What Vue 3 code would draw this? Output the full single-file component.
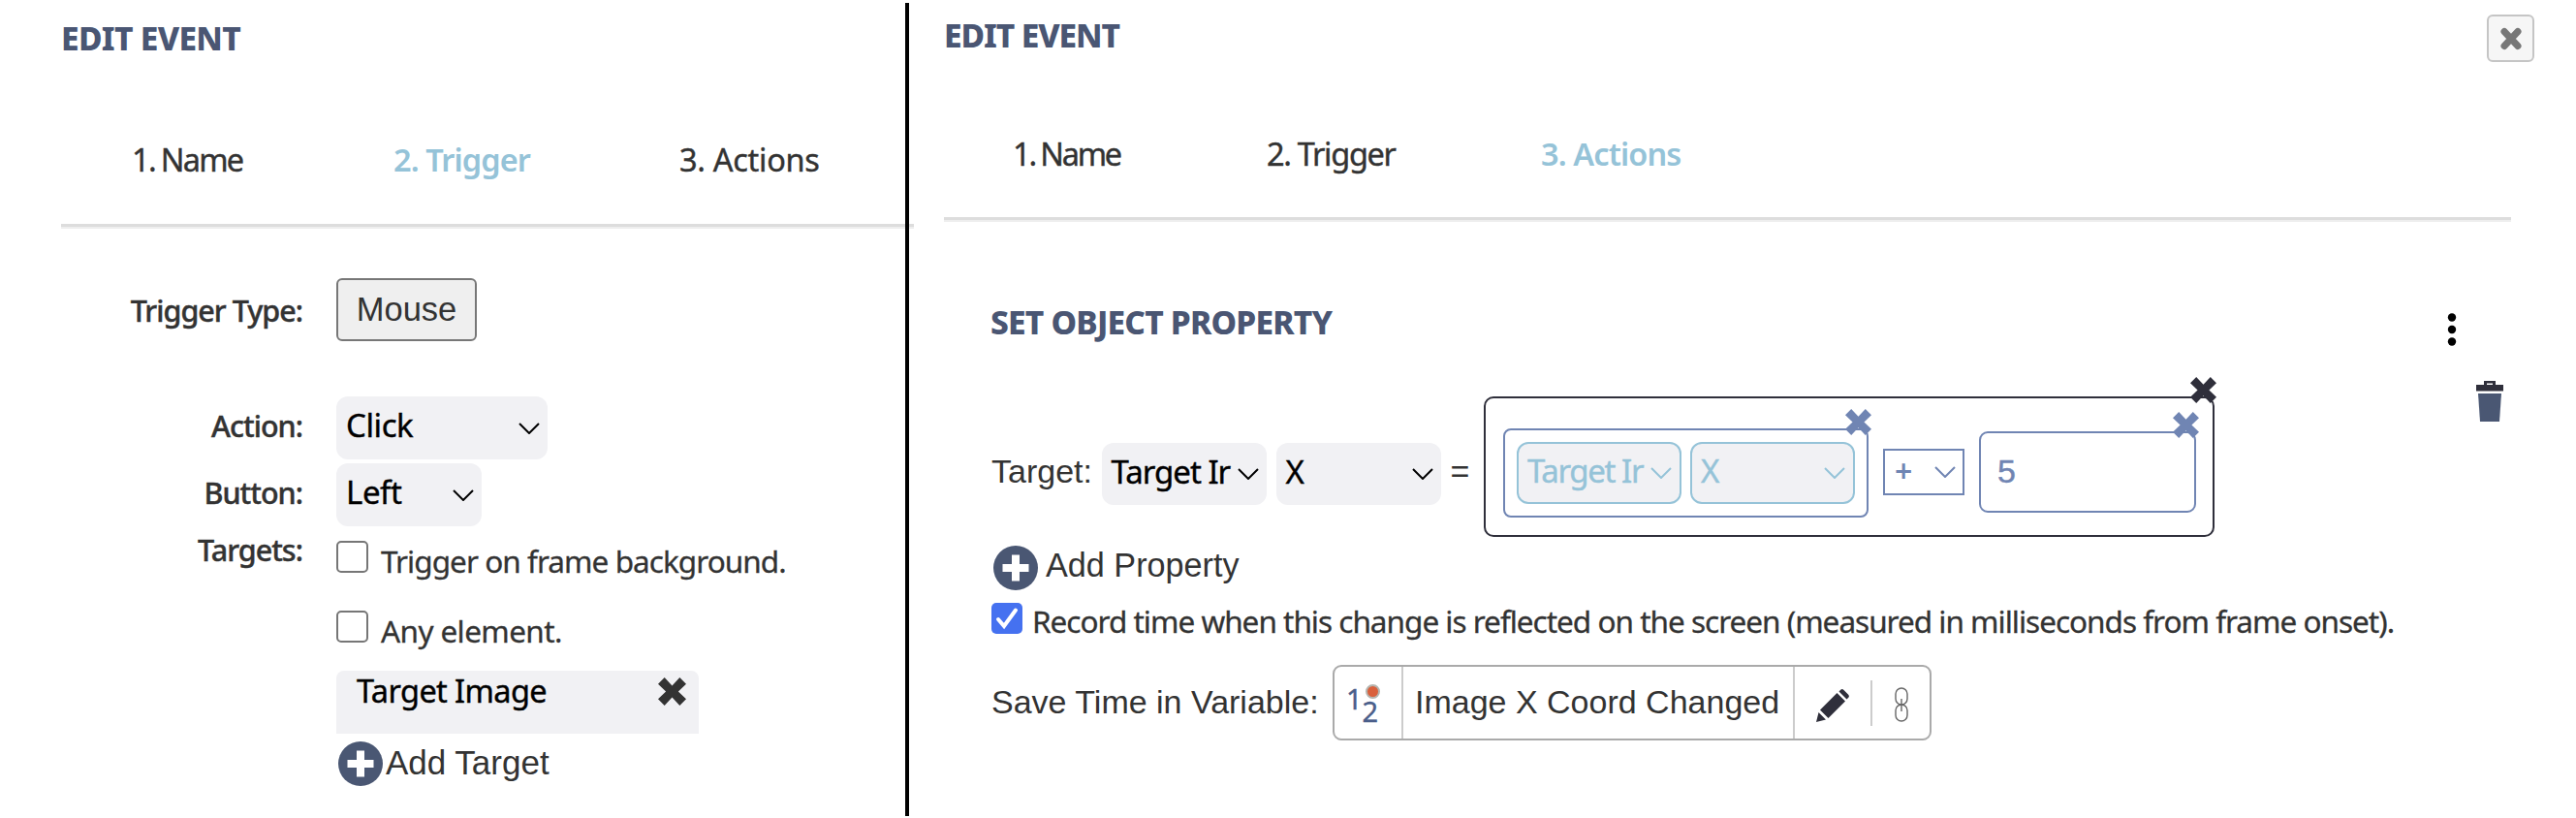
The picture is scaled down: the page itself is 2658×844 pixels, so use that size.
<template>
  <div class="page">
    <!-- Trigger step -->
    <section class="panel trigger-panel">
      <h2 class="title left-title">EDIT EVENT</h2>
      <nav class="tabs left-tabs">
        <span v-for="tab in tabs" :key="tab.id" class="tab" :class="[tab.id, { active: tab.id === 'trigger' }]">{{ tab.label }}</span>
      </nav>
      <div class="rule left-rule"></div>

      <div class="form-row type-row">
        <label class="label l-type">Trigger Type:</label>
        <button class="mouse-button">Mouse</button>
      </div>
      <div class="form-row action-row">
        <label class="label l-action">Action:</label>
        <div class="select click-select">
          <span class="value">Click</span>
          <svg class="chevron" viewBox="0 0 22 12"><path d="M1 1l10 10L21 1" /></svg>
        </div>
      </div>
      <div class="form-row button-row">
        <label class="label l-button">Button:</label>
        <div class="select left-select">
          <span class="value">Left</span>
          <svg class="chevron" viewBox="0 0 22 12"><path d="M1 1l10 10L21 1" /></svg>
        </div>
      </div>
      <div class="form-row targets-row">
        <label class="label l-targets">Targets:</label>
        <div class="targets">
          <div class="check-row">
            <span class="checkbox"></span>
            <span class="check-text t-frame">Trigger on frame background.</span>
          </div>
          <div class="check-row second">
            <span class="checkbox"></span>
            <span class="check-text t-any">Any element.</span>
          </div>
          <div class="chip">
            <span class="chip-text">Target Image</span>
            <svg class="chip-x" viewBox="0 0 10 10"><path :d="crossPath" /></svg>
          </div>
          <div class="add add-target">
            <svg class="plus" viewBox="0 0 46 46"><circle cx="23" cy="23" r="23" /><path d="M23 9.500v27M9.500 23h27" /></svg>
            <span>Add Target</span>
          </div>
        </div>
      </div>
    </section>

    <div class="divider"></div>

    <!-- Actions step -->
    <section class="panel actions-panel">
      <header class="header">
        <h2 class="title right-title">EDIT EVENT</h2>
        <button class="close">
          <svg viewBox="0 0 24 24"><path d="M5 4.500l14 15M19 4.500L5 19.500" /></svg>
        </button>
      </header>
      <nav class="tabs right-tabs">
        <span v-for="tab in tabs" :key="tab.id" class="tab" :class="[tab.id, { active: tab.id === 'actions' }]">{{ tab.label }}</span>
      </nav>
      <div class="rule right-rule"></div>

      <div class="action-body">
        <div class="action-main">
          <h3 class="title action-title">SET OBJECT PROPERTY</h3>

          <div class="formula">
            <div class="formula-left">
              <span class="arial target-label">Target:</span>
              <div class="select prop-select">
                <span class="value">Target Ir</span>
                <svg class="chevron" viewBox="0 0 22 12"><path d="M1 1l10 10L21 1" /></svg>
              </div>
              <div class="select prop-select">
                <span class="value">X</span>
                <svg class="chevron" viewBox="0 0 22 12"><path d="M1 1l10 10L21 1" /></svg>
              </div>
              <span class="arial equals">=</span>
            </div>

            <div class="expression">
              <svg class="corner-x" viewBox="0 0 10 10"><path :d="crossPath" /></svg>
              <div class="operand">
                <svg class="corner-x" viewBox="0 0 10 10"><path :d="crossPath" /></svg>
                <div class="select prop-select light">
                  <span class="value">Target Ir</span>
                  <svg class="chevron" viewBox="0 0 22 12"><path d="M1 1l10 10L21 1" /></svg>
                </div>
                <div class="select prop-select light">
                  <span class="value">X</span>
                  <svg class="chevron" viewBox="0 0 22 12"><path d="M1 1l10 10L21 1" /></svg>
                </div>
              </div>
              <div class="operator">
                <span>+</span>
                <svg class="chevron" viewBox="0 0 22 12"><path d="M1 1l10 10L21 1" /></svg>
              </div>
              <div class="number">
                <svg class="corner-x" viewBox="0 0 10 10"><path :d="crossPath" /></svg>
                <span>5</span>
              </div>
            </div>
          </div>

          <div class="add add-property">
            <svg class="plus" viewBox="0 0 46 46"><circle cx="23" cy="23" r="23" /><path d="M23 9.500v27M9.500 23h27" /></svg>
            <span>Add Property</span>
          </div>

          <div class="check-row record-row">
            <svg class="checked" viewBox="0 0 32 32"><rect width="32" height="32" rx="5" /><path d="M7 17l6 7L25 7.500" /></svg>
            <span class="check-text t-record">Record time when this change is reflected on the screen (measured in milliseconds from frame onset).</span>
          </div>

          <div class="save-row">
            <span class="arial save-label">Save Time in Variable:</span>
            <div class="variable">
              <div class="var-type">
                <span class="one">1</span>
                <span class="two">2</span>
                <i class="dot"></i>
              </div>
              <span class="arial var-name">Image X Coord Changed</span>
              <div class="var-edit">
                <svg class="pencil" viewBox="0 0 34 34">
                  <path d="M0 34l2.500-10 7.500 7.500zM4 21.500L21.500 4l8.500 8.500L12.500 30zM23.500 2.500L25.500.5q1.500-1 3 .5l4.500 4.500q1.500 1.500.5 3l-2 2z" />
                </svg>
                <span class="bar"></span>
                <svg class="chain" viewBox="0 0 14 36">
                  <rect x="1" y="1" width="12" height="17" rx="6" />
                  <rect x="1" y="18" width="12" height="17" rx="6" />
                  <path d="M7 12v13" />
                </svg>
              </div>
            </div>
          </div>
        </div>

        <div class="action-tools">
          <svg class="dots" viewBox="0 0 10 34"><circle cx="5" cy="4.500" r="4.200" /><circle cx="5" cy="17" r="4.200" /><circle cx="5" cy="29.500" r="4.200" /></svg>
          <svg class="trash" viewBox="0 0 28 42">
            <path class="lid" d="M0 4h8V0h12v4h8v6.500H0zM11 2.500V4h6V2.500z" fill-rule="evenodd" />
            <path class="bin" d="M2 13h24l-2 29H4z" />
          </svg>
        </div>
      </div>
    </section>
  </div>
</template>

<script setup>
const tabs = [
  { id: 'name', label: '1. Name' },
  { id: 'trigger', label: '2. Trigger' },
  { id: 'actions', label: '3. Actions' },
]
const crossPath = 'M2.300 0L5 2.900 7.700 0 10 2.300 7.200 5 10 7.700 7.700 10 5 7.100 2.300 10 0 7.700 2.800 5 0 2.300z'
</script>

<style>
body {
  background: #fff;
}
</style>

<style scoped>
.page {
  display: flex;
  width: 2658px;
  height: 844px;
  overflow: hidden;
  background: #fff;
  color: #333;
  font-family: 'Noto Sans', sans-serif;
}

.page * {
  box-sizing: border-box;
}

svg {
  display: block;
  flex: none;
}

.trigger-panel {
  width: 934px;
  flex: none;
  padding-left: 63px;
}

.divider {
  width: 4px;
  flex: none;
  margin: 3px 0 2px;
  background: #000;
  z-index: 1;
}

.actions-panel {
  flex: 1;
  padding-left: 36px;
}

.title {
  margin: 0;
  color: #4a5673;
  font-weight: 800;
  font-size: 33.500px;
  white-space: nowrap;
  letter-spacing: -1.100px;
}

.left-title {
  line-height: 79px;
  height: 78px;
  letter-spacing: -0.7px;
}

.header {
  display: flex;
  justify-content: space-between;
  align-items: flex-start;
  height: 71px;
  padding-right: 43px;
}

.right-title {
  line-height: 72px;
}

.close {
  display: flex;
  align-items: center;
  justify-content: center;
  width: 49px;
  height: 49px;
  margin-top: 15px;
  padding: 0;
  border: 2px solid #c5c5c5;
  border-radius: 6px;
  background: #f6f6f6;
}

.close svg {
  width: 24px;
  height: 24px;
}

.close path {
  stroke: #777;
  stroke-width: 7;
  stroke-linecap: round;
}

.tabs {
  display: grid;
  height: 153px;
  align-items: center;
  font-size: 32.500px;
  white-space: nowrap;
  -webkit-text-stroke: 0.4px currentColor;
}

.left-tabs {
  grid-template-columns: 270px 295px auto;
  padding: 20px 0 0 73px;
}

.left-tabs .name {
  letter-spacing: -1.700px;
  word-spacing: -1px;
}

.left-tabs .trigger {
  letter-spacing: -0.9px;
}

.left-tabs .actions {
  letter-spacing: -0.3px;
}

.right-tabs {
  grid-template-columns: 262px 283px auto;
  padding: 22px 0 0 71px;
}

.right-tabs .name {
  letter-spacing: -2.200px;
  word-spacing: -1px;
}

.right-tabs .trigger {
  letter-spacing: -1.300px;
}

.right-tabs .actions {
  letter-spacing: -0.9px;
}

.tab.active {
  color: #95c3d8;
  font-weight: 600;
  -webkit-text-stroke: 0;
}

.rule {
  height: 5px;
  background: linear-gradient(#ddd 60%, #eee 60%);
}

.left-rule {
  margin-right: -9px;
}

.right-rule {
  margin-right: 67px;
}

.form-row {
  display: grid;
  grid-template-columns: 249px auto;
  column-gap: 35px;
  align-items: center;
  justify-content: start;
}

.type-row {
  margin-top: 51px;
}

.action-row {
  margin-top: 57px;
}

.button-row {
  margin-top: 4px;
}

.targets-row {
  align-items: start;
}

.label {
  font-size: 30.500px;
  font-weight: 500;
  text-align: right;
  letter-spacing: -1px;
  -webkit-text-stroke: 0.4px currentColor;
}

.l-action,
.l-button {
  padding-bottom: 5px;
}

.l-targets {
  line-height: 48px;
}

.mouse-button {
  width: 145px;
  height: 65px;
  padding: 0;
  border: 2px solid #777;
  border-radius: 6px;
  background: #efefef;
  color: #333;
  font: 34.500px 'Liberation Sans', Arial, sans-serif;
}

.select {
  display: flex;
  align-items: center;
  justify-content: space-between;
  height: 65px;
  padding: 0 8px 0 10px;
  border-radius: 12px;
  background: #f1f1f4;
  color: #000;
  font-size: 33px;
}

.click-select {
  width: 218px;
}

.left-select {
  width: 150px;
}

.value {
  padding-bottom: 7px;
  white-space: nowrap;
  letter-spacing: -0.4px;
  -webkit-text-stroke: 0.4px currentColor;
}

.chevron {
  width: 22px;
  height: 12px;
}

.chevron path {
  fill: none;
  stroke: currentColor;
  stroke-width: 2;
}

.targets {
  padding-top: 15px;
}

.check-row {
  display: flex;
  align-items: center;
  height: 33px;
}

.check-row.second {
  margin-top: 39px;
}

.checkbox {
  width: 33px;
  height: 33px;
  margin-right: 13px;
  border: 2px solid #767676;
  border-radius: 5px;
  background: #fff;
}

.check-text {
  padding-top: 8px;
  font-size: 31.500px;
  letter-spacing: -0.95px;
  white-space: nowrap;
  -webkit-text-stroke: 0.3px currentColor;
}

.t-any {
  letter-spacing: -0.6px;
}

.t-record {
  padding-top: 6px;
  letter-spacing: -1px;
}

.chip {
  display: flex;
  align-items: flex-start;
  justify-content: space-between;
  width: 374px;
  height: 65px;
  margin-top: 29px;
  padding: 0 13px 0 21px;
  border-radius: 8px 8px 0 0;
  background: #f1f1f4;
  color: #000;
}

.chip-text {
  line-height: 42px;
  font-size: 32.500px;
  letter-spacing: -0.6px;
  -webkit-text-stroke: 0.4px currentColor;
}

.chip-x {
  width: 29px;
  height: 29px;
  margin-top: 7px;
  fill: #333;
}

.add {
  display: flex;
  align-items: center;
  height: 46px;
  font-family: 'Liberation Sans', Arial, sans-serif;
  font-size: 34.200px;
  white-space: nowrap;
}

.add span {
  padding-bottom: 5px;
}

.add-target {
  margin-top: 8px;
  padding-left: 2px;
  gap: 3px;
  font-size: 35px;
}

.add-target span {
  padding-bottom: 3px;
}

.plus {
  width: 46px;
  height: 46px;
}

.plus circle {
  fill: #4a5773;
}

.plus path {
  stroke: #fff;
  stroke-width: 8;
}

.arial {
  font-family: 'Liberation Sans', Arial, sans-serif;
  font-size: 34px;
  white-space: nowrap;
}

.action-body {
  display: flex;
  padding-left: 49px;
}

.action-main {
  width: 1502px;
  padding-top: 78px;
}

.action-title {
  line-height: 50px;
  margin-left: -1px;
  letter-spacing: -0.8px;
}

.formula {
  display: flex;
  height: 145px;
  margin-top: 52px;
}

.formula-left {
  display: flex;
  align-items: center;
  width: 508px;
  height: 64px;
  margin-top: 48px;
}

.target-label {
  width: 113.500px;
  padding-bottom: 6px;
}

.prop-select {
  width: 170px;
  height: 64px;
  margin-right: 10px;
}

.prop-select .value {
  padding-bottom: 6px;
  letter-spacing: -1px;
}

.equals {
  width: 20px;
  padding-bottom: 5px;
}

.expression {
  position: relative;
  display: flex;
  align-items: center;
  width: 754px;
  padding: 11px 0 0 18px;
  border: 2px solid #2f2f3b;
  border-radius: 10px;
}

.corner-x {
  position: absolute;
  top: -22px;
  right: -4px;
  width: 27px;
  height: 27px;
  fill: #2f2f3b;
}

.operand {
  position: relative;
  display: flex;
  gap: 9px;
  width: 377px;
  height: 92px;
  margin-top: 2px;
  padding: 12px;
  border: 2px solid #7085b3;
  border-radius: 8px;
}

.operand .corner-x,
.number .corner-x {
  right: -5px;
  fill: #7085b3;
}

.light {
  margin: 0;
  padding: 0 8px 0 9px;
  border: 2px solid #95c3d8;
  color: #95c3d8;
}

.light .value {
  padding-bottom: 5px;
  letter-spacing: -1.400px;
}

.operator {
  display: flex;
  align-items: center;
  justify-content: space-between;
  width: 84px;
  height: 48px;
  margin: 0 15px;
  padding: 0 7px 0 10px;
  border: 2px solid #7085b3;
  color: #7085b3;
  font: 600 32px/42px 'Noto Sans', sans-serif;
}

.operator span {
  padding-bottom: 2px;
}

.number {
  position: relative;
  display: flex;
  align-items: center;
  width: 224px;
  height: 84px;
  padding: 0 0 2px 17px;
  border: 2px solid #7085b3;
  border-radius: 9px;
  color: #7085b3;
  font: 34px 'Liberation Sans', Arial, sans-serif;
  -webkit-text-stroke: 0.4px currentColor;
}

.add-property {
  margin-top: 9px;
  padding-left: 2px;
  gap: 8px;
}

.record-row {
  margin-top: 12px;
}

.checked {
  width: 32px;
  height: 32px;
  margin-right: 10px;
}

.checked rect {
  fill: #4571f0;
}

.checked path {
  fill: none;
  stroke: #fff;
  stroke-width: 4;
  stroke-linecap: round;
}

.save-row {
  display: flex;
  align-items: center;
  margin-top: 32px;
}

.save-label {
  width: 352px;
  padding-bottom: 1px;
}

.variable {
  display: flex;
  width: 618px;
  height: 78px;
  border: 2px solid #aaa;
  border-radius: 9px;
}

.var-type {
  position: relative;
  display: flex;
  width: 71px;
  padding-left: 12px;
  border-right: 2px solid #ccc;
  color: #4a5e8a;
  font-size: 29px;
  -webkit-text-stroke: 0.4px currentColor;
}

.one {
  line-height: 65px;
}

.two {
  line-height: 92px;
}

.dot {
  position: absolute;
  left: 32px;
  top: 18px;
  width: 15px;
  height: 15px;
  border: 2px solid #b5b5b0;
  border-radius: 50%;
  background: #d9603c;
}

.var-name {
  width: 404px;
  padding-left: 12px;
  border-right: 2px solid #ccc;
  line-height: 73px;
}

.var-edit {
  display: flex;
  align-items: center;
  padding-left: 22px;
}

.pencil {
  width: 34px;
  height: 34px;
  margin-top: 6px;
  fill: #2f2f3b;
}

.bar {
  width: 2px;
  height: 47px;
  margin: 0 23px 0 22px;
  background: #ccc;
}

.chain {
  width: 14px;
  height: 36px;
  margin-top: 4px;
}

.chain rect,
.chain path {
  fill: none;
  stroke: #666;
  stroke-width: 1.400;
}

.dots {
  width: 10px;
  height: 34px;
  margin-top: 94px;
  fill: #000;
}

.trash {
  width: 28px;
  height: 42px;
  margin: 36px 0 0 30px;
}

.lid {
  fill: #2f2f3b;
}

.bin {
  fill: #4a5773;
}
</style>
